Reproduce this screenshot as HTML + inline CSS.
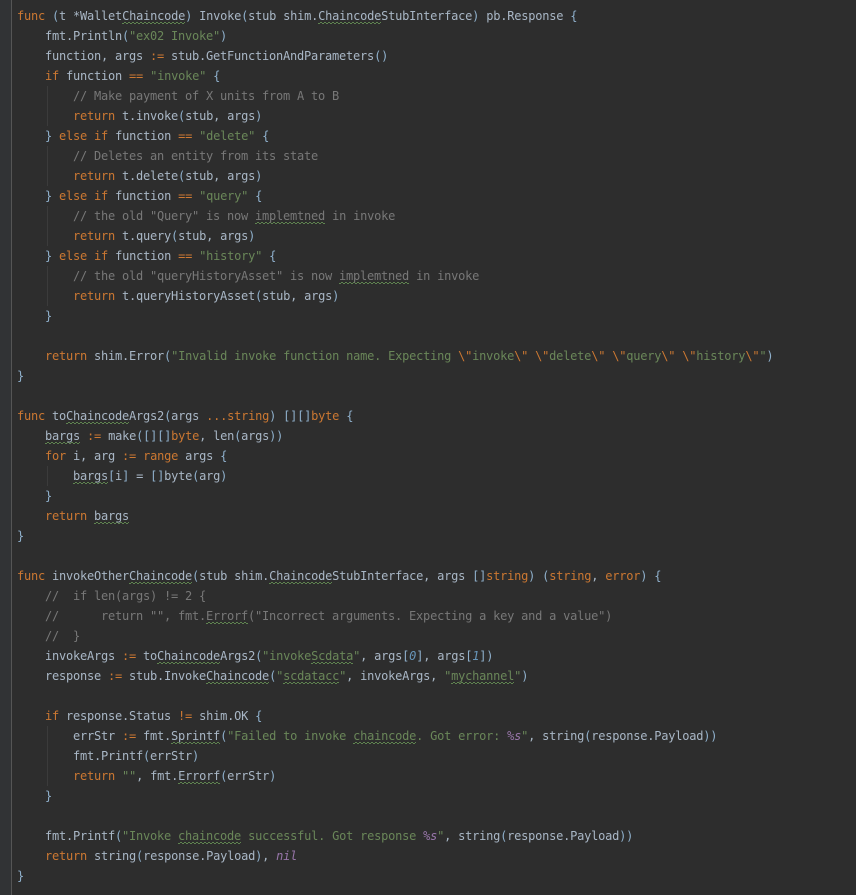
<!DOCTYPE html>
<html lang="en">
<head>
<meta charset="utf-8">
<title>Code</title>
<style>
html,body{margin:0;padding:0;background:#2d2d2d;}
#e{position:relative;width:856px;height:895px;overflow:hidden;background:#2d2d2d;}
#g{position:absolute;left:0;top:0;width:11px;height:895px;background:#313335;border-right:1px solid #555;}
.i{position:absolute;left:47px;width:1px;background:#3b3b3b;}
pre{position:absolute;left:17px;top:6px;margin:0;font-family:"DejaVu Sans Mono","Liberation Mono",monospace;font-size:12px;letter-spacing:-0.224px;line-height:20px;color:#a9b7c6;white-space:pre;}
.k{color:#cc7832;}
.s{color:#6a8759;}
.c{color:#787878;}
.p{color:#9876aa;font-style:italic;}
.n{color:#6897bb;font-style:italic;}
.b{color:#8fb0cc;}
.w{padding-bottom:1px;background:linear-gradient(90deg,#5f8450 50%,transparent 0) 0 100%/4px 1px repeat-x,linear-gradient(90deg,transparent 50%,#5f8450 0) 0 calc(100% - 1px)/4px 1px repeat-x;}
</style>
</head>
<body>
<div id="e">
<div id="g"></div>
<div class="i" style="top:86px;height:40px"></div>
<div class="i" style="top:146px;height:40px"></div>
<div class="i" style="top:206px;height:40px"></div>
<div class="i" style="top:266px;height:40px"></div>
<div class="i" style="top:466px;height:20px"></div>
<div class="i" style="top:726px;height:60px"></div>
<pre><span class="k">func</span> <span class="b">(</span>t *Wallet<span class="w">Chaincode</span><span class="b">)</span> Invoke<span class="b">(</span>stub shim.<span class="w">Chaincode</span>StubInterface<span class="b">)</span> pb.Response <span class="b">{</span>
    fmt.Println<span class="b">(</span><span class="s">"ex02 Invoke"</span><span class="b">)</span>
    function, args <span class="k">:=</span> stub.GetFunctionAndParameters<span class="b">()</span>
    <span class="k">if</span> function <span class="k">==</span> <span class="s">"invoke"</span> <span class="b">{</span>
        <span class="c">// Make payment of X units from A to B</span>
        <span class="k">return</span> t.invoke<span class="b">(</span>stub, args<span class="b">)</span>
    <span class="b">}</span> <span class="k">else if</span> function <span class="k">==</span> <span class="s">"delete"</span> <span class="b">{</span>
        <span class="c">// Deletes an entity from its state</span>
        <span class="k">return</span> t.delete<span class="b">(</span>stub, args<span class="b">)</span>
    <span class="b">}</span> <span class="k">else if</span> function <span class="k">==</span> <span class="s">"query"</span> <span class="b">{</span>
        <span class="c">// the old "Query" is now <span class="w">implemtned</span> in invoke</span>
        <span class="k">return</span> t.query<span class="b">(</span>stub, args<span class="b">)</span>
    <span class="b">}</span> <span class="k">else if</span> function <span class="k">==</span> <span class="s">"history"</span> <span class="b">{</span>
        <span class="c">// the old "queryHistoryAsset" is now <span class="w">implemtned</span> in invoke</span>
        <span class="k">return</span> t.queryHistoryAsset<span class="b">(</span>stub, args<span class="b">)</span>
    <span class="b">}</span>

    <span class="k">return</span> shim.Error<span class="b">(</span><span class="s">"Invalid invoke function name. Expecting <span class="k">\"</span>invoke<span class="k">\"</span> <span class="k">\"</span>delete<span class="k">\"</span> <span class="k">\"</span>query<span class="k">\"</span> <span class="k">\"</span>history<span class="k">\"</span>"</span><span class="b">)</span>
<span class="b">}</span>

<span class="k">func</span> to<span class="w">Chaincode</span>Args2<span class="b">(</span>args <span class="k">...string</span><span class="b">)</span> <span class="b">[][]</span><span class="k">byte</span> <span class="b">{</span>
    <span class="w">bargs</span> <span class="k">:=</span> make<span class="b">([][]</span><span class="k">byte</span>, len<span class="b">(</span>args<span class="b">))</span>
    <span class="k">for</span> i, arg <span class="k">:=</span> <span class="k">range</span> args <span class="b">{</span>
        <span class="w">bargs</span><span class="b">[</span>i<span class="b">]</span> = <span class="b">[]</span>byte<span class="b">(</span>arg<span class="b">)</span>
    <span class="b">}</span>
    <span class="k">return</span> <span class="w">bargs</span>
<span class="b">}</span>

<span class="k">func</span> invokeOther<span class="w">Chaincode</span><span class="b">(</span>stub shim.<span class="w">Chaincode</span>StubInterface, args <span class="b">[]</span><span class="k">string</span><span class="b">)</span> <span class="b">(</span><span class="k">string</span>, <span class="k">error</span><span class="b">)</span> <span class="b">{</span>
    <span class="c">//  if len(args) != 2 {</span>
    <span class="c">//      return "", fmt.<span class="w">Errorf</span>("Incorrect arguments. Expecting a key and a value")</span>
    <span class="c">//  }</span>
    invokeArgs <span class="k">:=</span> to<span class="w">Chaincode</span>Args2<span class="b">(</span><span class="s">"invoke<span class="w">Scdata</span>"</span>, args<span class="b">[</span><span class="n">0</span><span class="b">]</span>, args<span class="b">[</span><span class="n">1</span><span class="b">])</span>
    response <span class="k">:=</span> stub.Invoke<span class="w">Chaincode</span><span class="b">(</span><span class="s">"<span class="w">scdatacc</span>"</span>, invokeArgs, <span class="s">"<span class="w">mychannel</span>"</span><span class="b">)</span>

    <span class="k">if</span> response.Status <span class="k">!=</span> shim.OK <span class="b">{</span>
        errStr <span class="k">:=</span> fmt.<span class="w">Sprintf</span><span class="b">(</span><span class="s">"Failed to invoke <span class="w">chaincode</span>. Got error: <span class="p">%s</span>"</span>, string<span class="b">(</span>response.Payload<span class="b">))</span>
        fmt.Printf<span class="b">(</span>errStr<span class="b">)</span>
        <span class="k">return</span> <span class="s">""</span>, fmt.<span class="w">Errorf</span><span class="b">(</span>errStr<span class="b">)</span>
    <span class="b">}</span>

    fmt.Printf<span class="b">(</span><span class="s">"Invoke <span class="w">chaincode</span> successful. Got response <span class="p">%s</span>"</span>, string<span class="b">(</span>response.Payload<span class="b">))</span>
    <span class="k">return</span> string<span class="b">(</span>response.Payload<span class="b">)</span>, <span class="p">nil</span>
<span class="b">}</span></pre>
</div>
</body>
</html>
